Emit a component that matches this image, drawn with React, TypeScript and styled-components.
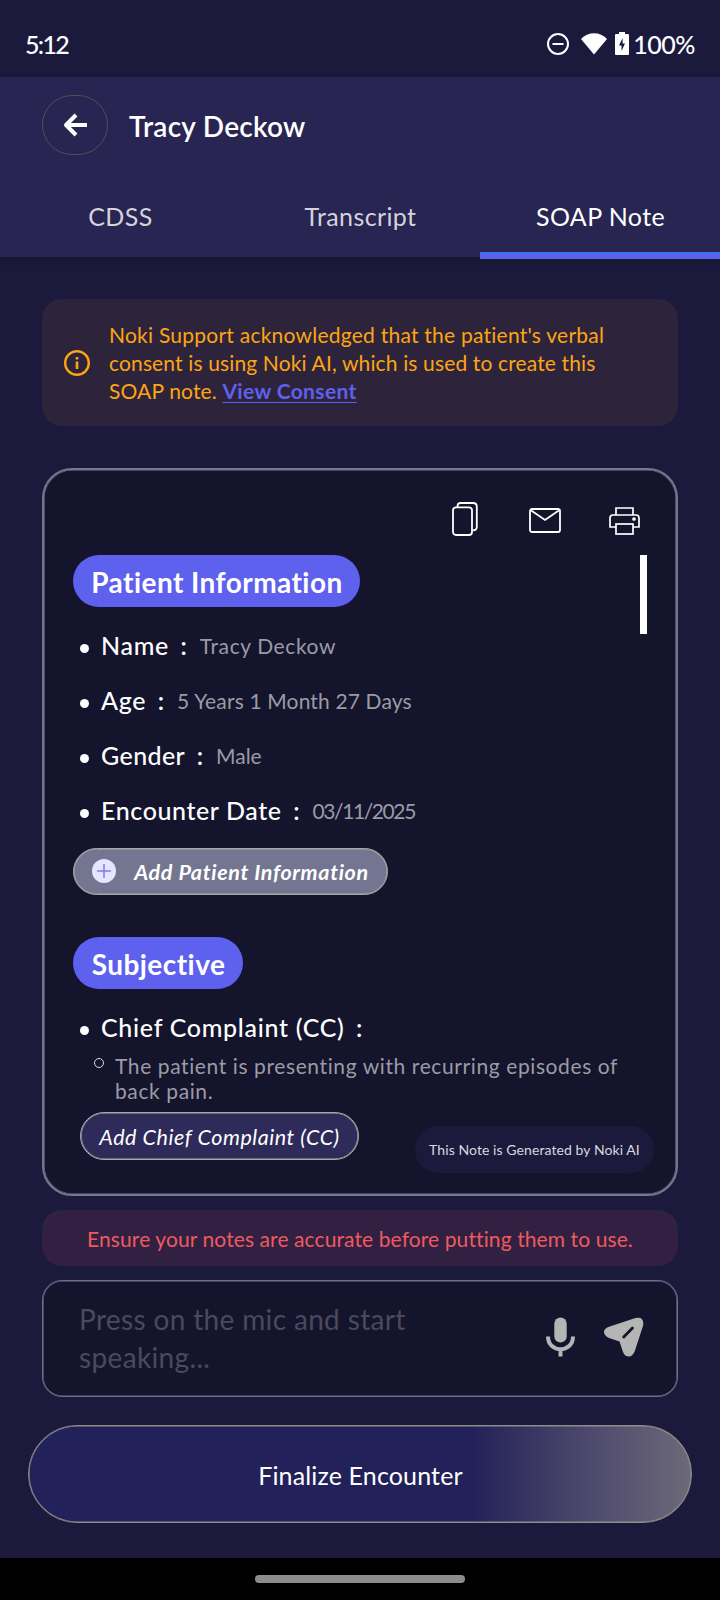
import React from 'react';
import styled, { createGlobalStyle } from 'styled-components';

const GlobalStyle = createGlobalStyle`
  *, *::before, *::after { box-sizing: border-box; }
  body {
    margin: 0;
    background: #1b1a3d;
    color: #fff;
    font-family: Lato, "Open Sans", sans-serif;
    font-variant-ligatures: none;
  }
  button { font: inherit; color: inherit; margin: 0; cursor: pointer; }
  svg { display: block; flex: none; }
`;

const Screen = styled.div`
  width: 720px;
  height: 1600px;
  display: flex;
  flex-direction: column;
  overflow: hidden;
`;

const StatusBar = styled.div`
  height: 77px;
  padding: 10px 25px 0 25px;
  display: flex;
  align-items: center;
  justify-content: space-between;
  font-size: 25px;
  font-weight: 500;
  letter-spacing: -1.7px;
`;

const StatusIcons = styled.div`
  display: flex;
  align-items: center;
  letter-spacing: -0.5px;
`;

const Header = styled.header`
  height: 180px;
  padding-top: 18px;
  background: #282552;
  box-shadow: 0 2px 8px rgba(0, 0, 0, 0.25);
`;

const TitleRow = styled.div`
  display: flex;
  align-items: center;
  height: 60px;
  padding-left: 42px;
  gap: 21px;
`;

const BackButton = styled.button`
  width: 66px;
  height: 60px;
  padding: 0;
  border: 1px solid #504f55;
  border-radius: 30px;
  background: transparent;
  display: flex;
  align-items: center;
  justify-content: center;
`;

const Title = styled.h1`
  margin: 2px 0 0;
  font-size: 28px;
  font-weight: 600;
  letter-spacing: 0.25px;
`;

const Tabs = styled.nav`
  display: grid;
  grid-template-columns: repeat(3, 1fr);
  height: 84px;
  margin-top: 18px;
`;

const Tab = styled.button<{ $active?: boolean }>`
  position: relative;
  padding: 1px 0 0 1px;
  border: 0;
  background: none;
  font-size: 25px;
  letter-spacing: 0.4px;
  color: ${(p) => (p.$active ? '#fff' : '#d4d3dc')};
`;

const Indicator = styled.span`
  position: absolute;
  left: 0;
  right: 0;
  bottom: -2px;
  height: 7px;
  border-top: 1px solid #1580fa;
  background: #5e60ee;
`;

const Body = styled.main`
  flex: 1;
  display: flex;
  flex-direction: column;
  padding: 42px 42px 0;
`;

const Notice = styled.section`
  height: 127px;
  border-radius: 20px;
  background: #2d243c;
  display: flex;
  align-items: center;
  padding-left: 22px;
  gap: 19px;
  color: #fda512;
`;

const NoticeText = styled.p`
  margin: 0;
  width: 520px;
  font-size: 21px;
  line-height: 28px;
`;

const NoticeLine = styled.span<{ $spacing: number }>`
  display: block;
  letter-spacing: ${(p) => p.$spacing}px;
`;

const ConsentLink = styled.a`
  color: #5e60ee;
  font-weight: 700;
  letter-spacing: 0.35px;
  text-decoration: underline;
  text-decoration-thickness: 1px;
  text-underline-offset: 3px;
`;

const NoteCard = styled.section`
  position: relative;
  height: 728px;
  margin-top: 42px;
  border: 2px solid #76758f;
  border-radius: 30px;
  background: #15142d;
  box-shadow: inset 0 0 0 0.6px #76758f;
`;

const CardActions = styled.div`
  height: 85px;
  padding: 31px 36px 0 0;
  display: flex;
  justify-content: flex-end;
  align-items: flex-start;
`;

const ScrollArea = styled.div`
  display: flex;
  justify-content: space-between;
  padding: 0 29px 0 29px;
`;

const ScrollThumb = styled.div`
  width: 7px;
  height: 79px;
  background: #fff;
`;

const NoteContent = styled.div`
  display: flex;
  flex-direction: column;
  align-items: flex-start;
`;

const SectionPill = styled.h2<{ $width: number; $gapBelow: number }>`
  margin: 0 0 ${(p) => p.$gapBelow}px;
  width: ${(p) => p.$width}px;
  height: 52px;
  padding-left: 1px;
  border-radius: 26px;
  background: #5e60ee;
  text-align: center;
  font-size: 28px;
  line-height: 54px;
  font-weight: 700;
  letter-spacing: 0.45px;
`;

const Field = styled.div<{ $height?: number }>`
  height: ${(p) => p.$height ?? 55}px;
  display: flex;
  align-items: center;
  padding-left: 7px;
`;

const Dot = styled.span`
  width: 9px;
  height: 9px;
  margin: 5px 12px 0 0;
  border-radius: 50%;
  background: #fff;
`;

const Label = styled.span<{ $spacing: number }>`
  margin-top: -1px;
  font-size: 25px;
  line-height: 30px;
  font-weight: 500;
  letter-spacing: ${(p) => p.$spacing}px;
`;

const Colon = styled.span`
  margin: -1px 13px 0 11.5px;
  font-size: 25px;
  line-height: 30px;
  font-weight: 600;
`;

const Value = styled.span<{ $spacing: number }>`
  font-size: 21px;
  line-height: 30px;
  color: #9c9ba5;
  letter-spacing: ${(p) => p.$spacing}px;
`;

const AddButton = styled.button<{ $primary?: boolean }>`
  height: ${(p) => (p.$primary ? 47 : 48)}px;
  width: ${(p) => (p.$primary ? 315 : 279)}px;
  margin: ${(p) => (p.$primary ? '10px 0 42px' : '8px 0 0 7px')};
  padding: 1px 0 0;
  display: flex;
  align-items: center;
  justify-content: center;
  gap: 18px;
  border: 1px solid #a9a7a5;
  border-radius: 24px;
  box-shadow: inset 0 0 0 0.6px #a9a7a5;
  background: ${(p) => (p.$primary ? '#747590' : '#2e2b5a')};
  font-size: 21.5px;
  font-style: italic;
  font-weight: ${(p) => (p.$primary ? 700 : 400)};
  letter-spacing: ${(p) => (p.$primary ? 0.65 : 0.55)}px;
`;

const SubItem = styled.div`
  display: flex;
  align-items: flex-start;
  padding-left: 21px;
`;

const Ring = styled.span`
  flex: none;
  width: 10px;
  height: 10px;
  margin: 4px 11px 0 0;
  border: 1px solid #dcdbe2;
  border-radius: 50%;
`;

const SubText = styled.p`
  margin: -1px 0 1px;
  width: 520px;
  font-size: 21px;
  line-height: 25px;
  letter-spacing: 0.6px;
  color: #9c9ba5;
`;

const GeneratedBadge = styled.div`
  position: absolute;
  right: 22px;
  bottom: 21px;
  width: 239px;
  height: 47px;
  border-radius: 24px;
  background: #1b1a3d;
  color: #d8d7df;
  text-align: center;
  font-size: 14px;
  line-height: 48px;
  letter-spacing: 0.08px;
`;

const Warning = styled.section`
  height: 56px;
  margin-top: 14px;
  border-radius: 20px;
  background: #312042;
  color: #ef5a5f;
  text-align: center;
  font-size: 21px;
  line-height: 57px;
  letter-spacing: 0.1px;
`;

const Composer = styled.section`
  height: 117px;
  margin-top: 14px;
  padding-left: 36px;
  border: 1px solid #6f6e8b;
  border-radius: 20px;
  box-shadow: inset 0 0 0 0.6px #6f6e8b;
  background: #15142d;
  display: flex;
  align-items: center;
`;

const Placeholder = styled.p`
  margin: 0 0 1px;
  width: 467px;
  padding-right: 100px;
  font-size: 28px;
  line-height: 38px;
  letter-spacing: 0.35px;
  color: #4a495d;
`;

const ComposerIcons = styled.div`
  display: flex;
  align-items: center;
  gap: 29px;
  margin-bottom: 3px;
`;

const FinalizeButton = styled.button`
  height: 98px;
  margin: 28px -14px 0;
  padding: 2px 0 0 1px;
  border: 1px solid #8f8c8a;
  border-radius: 49px;
  box-shadow: inset 0 0 0 0.6px #8f8c8a;
  background: linear-gradient(90deg, #232159 67%, #4a466b 83%, #6d6979 100%);
  font-size: 25px;
  letter-spacing: 0.15px;
`;

const NavBar = styled.footer`
  height: 42px;
  background: #000;
  display: flex;
  align-items: center;
  justify-content: center;
`;

const NavHandle = styled.div`
  width: 210px;
  height: 8px;
  border-radius: 4px;
  background: #8c8c8c;
`;

const DoNotDisturbIcon = () => (
  <svg width="24" height="24" viewBox="0 0 24 24" fill="none" stroke="#fff" strokeWidth="2">
    <circle cx="12" cy="12" r="10" />
    <path d="M6.5 12h11" />
  </svg>
);

const StatusWifi = styled.svg`
  margin-left: 11px;
`;

const WifiIcon = () => (
  <StatusWifi width="26" height="22" viewBox="0 0 26 22">
    <path d="M0 6C7-1.6 19-1.6 26 6L13 21.500Z" fill="#fff" />
  </StatusWifi>
);

const StatusBattery = styled.svg`
  margin: 0 4px 0 8px;
`;

const BatteryIcon = () => (
  <StatusBattery width="14" height="23" viewBox="0 0 14 23">
    <path d="M4 0h6v2h3q1 0 1 1v19q0 1-1 1H1q-1 0-1-1V3q0-1 1-1h3z" fill="#fff" />
    <path d="M7.600 6L4 13.500h2.500V19L10 11.500H7.600z" fill="#1b1a3d" />
  </StatusBattery>
);

const BackIcon = () => (
  <svg width="26" height="26" viewBox="0 0 26 26" fill="none" stroke="#fff" strokeWidth="4">
    <path d="M14 3L4 13l10 10M4.500 13H25" strokeLinejoin="round" />
  </svg>
);

const InfoIcon = () => (
  <svg width="26" height="26" viewBox="0 0 26 26" fill="none" stroke="#fda512">
    <circle cx="13" cy="13" r="11.800" strokeWidth="2.400" />
    <path d="M13 11.500V19M13 7v2.500" strokeWidth="2.600" />
  </svg>
);

const ActionSlot = styled.span<{ $top: number }>`
  margin-top: ${(p) => p.$top}px;
`;

const CopyIcon = () => (
  <svg width="26" height="34" viewBox="0 0 26 34" fill="none" stroke="#fff" strokeWidth="1.800">
    <rect x="1" y="5.300" width="19" height="27.700" rx="3" />
    <path d="M5.500 5V4q0-3 3-3H21q3.800 0 3.800 3.500V25q0 3.300-4 3.300" />
  </svg>
);

const MailSlot = styled(ActionSlot)`
  margin-left: 51px;
  margin-right: 48px;
`;

const MailIcon = () => (
  <svg width="32" height="25" viewBox="0 0 32 25" fill="none" stroke="#fff" strokeWidth="1.800">
    <rect x="1" y="1" width="30" height="23" rx="2" />
    <path d="M1.500 2L16 12 30.500 2" />
  </svg>
);

const PrintIcon = () => (
  <svg width="31" height="28" viewBox="0 0 31 28" fill="none" stroke="#fff" strokeWidth="1.700">
    <path d="M7 8V1h17v7M7 20H1V11q0-3 3-3h23q3 0 3 3v9h-6" />
    <rect x="7" y="17" width="17" height="10" />
    <circle cx="25" cy="12" r="1" fill="#fff" />
  </svg>
);

const PlusBadge = styled.svg`
  margin-top: -3px;
`;

const PlusIcon = () => (
  <PlusBadge width="24" height="24" viewBox="0 0 24 24">
    <circle cx="12" cy="12" r="12" fill="#e6e5ff" />
    <path d="M12 5v14M5 12h14" stroke="#7d7df0" strokeWidth="1.500" />
  </PlusBadge>
);

const MicIcon = () => (
  <svg width="29" height="40" viewBox="0 0 29 40" fill="none">
    <rect x="8.300" y="0.500" width="12.400" height="25" rx="6.200" fill="#b5b5b5" />
    <path d="M2 19.500C2 36.500 27 36.500 27 19.500M14.500 32v7.500" stroke="#b5b5b5" strokeWidth="4" />
  </svg>
);

const SendIcon = () => (
  <svg width="40" height="40" viewBox="0 0 40 40">
    <path d="M31.500 1.100Q40-.8 39.200 8.200L31 33.500Q28.800 39.500 24.800 39.500T19 35L15.500 24.500 5 21Q0 18.500 0 15T5 9.800Z" fill="#b5b5b5" />
    <path d="M19.700 20l8.800-9" stroke="#15142d" strokeWidth="2.800" strokeLinecap="round" />
  </svg>
);

type PatientField = { label: string; value: string; labelSpacing: number; valueSpacing: number };

const patientFields: PatientField[] = [
  { label: 'Name', value: 'Tracy Deckow', labelSpacing: 0.7, valueSpacing: 0.6 },
  { label: 'Age', value: '5 Years 1 Month 27 Days', labelSpacing: 0.7, valueSpacing: 0.15 },
  { label: 'Gender', value: 'Male', labelSpacing: 0.4, valueSpacing: 0 },
  { label: 'Encounter Date', value: '03/11/2025', labelSpacing: 0.6, valueSpacing: -1.4 },
];

export default function App() {
  return (
    <Screen>
      <GlobalStyle />
      <StatusBar>
        <span>5:12</span>
        <StatusIcons>
          <DoNotDisturbIcon />
          <WifiIcon />
          <BatteryIcon />
          <span>100%</span>
        </StatusIcons>
      </StatusBar>
      <Header>
        <TitleRow>
          <BackButton aria-label="Back"><BackIcon /></BackButton>
          <Title>Tracy Deckow</Title>
        </TitleRow>
        <Tabs>
          <Tab>CDSS</Tab>
          <Tab>Transcript</Tab>
          <Tab $active>SOAP Note<Indicator /></Tab>
        </Tabs>
      </Header>
      <Body>
        <Notice>
          <InfoIcon />
          <NoticeText>
            <NoticeLine $spacing={0.24}>Noki Support acknowledged that the patient's verbal</NoticeLine>
            <NoticeLine $spacing={0.14}>consent is using Noki AI, which is used to create this</NoticeLine>
            <NoticeLine $spacing={0.15}>SOAP note. <ConsentLink>View Consent</ConsentLink></NoticeLine>
          </NoticeText>
        </Notice>
        <NoteCard>
          <CardActions>
            <ActionSlot $top={1}><CopyIcon /></ActionSlot>
            <MailSlot $top={7}><MailIcon /></MailSlot>
            <ActionSlot $top={6}><PrintIcon /></ActionSlot>
          </CardActions>
          <ScrollArea>
            <NoteContent>
              <SectionPill $width={287} $gapBelow={11}>Patient Information</SectionPill>
              {patientFields.map((f) => (
                <Field key={f.label}>
                  <Dot />
                  <Label $spacing={f.labelSpacing}>{f.label}</Label>
                  <Colon>:</Colon>
                  <Value $spacing={f.valueSpacing}>{f.value}</Value>
                </Field>
              ))}
              <AddButton $primary><PlusIcon />Add Patient Information</AddButton>
              <SectionPill $width={170} $gapBelow={12}>Subjective</SectionPill>
              <Field $height={53}>
                <Dot />
                <Label $spacing={0.7}>Chief Complaint (CC)</Label>
                <Colon>:</Colon>
              </Field>
              <SubItem>
                <Ring />
                <SubText>The patient is presenting with recurring episodes of<br />back pain.</SubText>
              </SubItem>
              <AddButton>Add Chief Complaint (CC)</AddButton>
            </NoteContent>
            <ScrollThumb />
          </ScrollArea>
          <GeneratedBadge>This Note is Generated by Noki AI</GeneratedBadge>
        </NoteCard>
        <Warning>Ensure your notes are accurate before putting them to use.</Warning>
        <Composer>
          <Placeholder>Press on the mic and start speaking...</Placeholder>
          <ComposerIcons>
            <MicIcon />
            <SendIcon />
          </ComposerIcons>
        </Composer>
        <FinalizeButton>Finalize Encounter</FinalizeButton>
      </Body>
      <NavBar><NavHandle /></NavBar>
    </Screen>
  );
}
